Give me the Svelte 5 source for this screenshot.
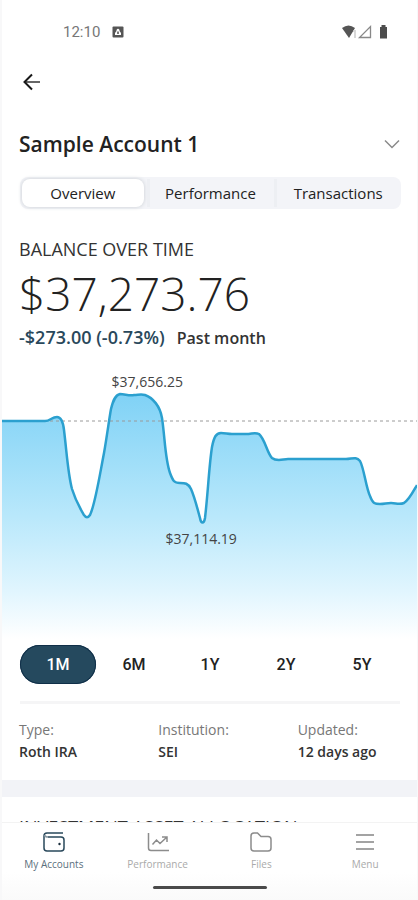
<script>
  const views = ['Overview', 'Performance', 'Transactions'];
  const ranges = ['1M', '6M', '1Y', '2Y', '5Y'];
  const details = [
    { label: 'Type:', value: 'Roth IRA' },
    { label: 'Institution:', value: 'SEI' },
    { label: 'Updated:', value: '12 days ago' }
  ];

  let view = $state('Overview');
  let range = $state('1M');

  const line =
    'M0 50 H43 C48 50 50 46 55 46 C59 46 61 50 62 59 C65 84 66 103 70 118 C74 131 79 139 82 144 C84 147 86 147 88 144 ' +
    'C93 134 97 108 102 82 C105 65 107 49 109 38 C111 30 113 24 118 23 C123 23 127 25 132 24 C136 24 139 23 143 24 ' +
    'C151 27 158 35 160 47 C163 67 163 88 168 102 C171 110 172 112 178 112 C183 112 186 112 189 118 C193 127 196 140 198 147 ' +
    'C199 153 202 153 203 147 C206 122 207 95 210 76 C212 66 214 62 219 62 C223 62 226 63 230 63 H244 C250 63 253 61 257 63 ' +
    'C263 68 265 82 270 87 C275 91 281 88 286 88 H344 C350 88 354 85 358 90 C362 97 364 117 368 125 ' +
    'C371 133 373 133 378 133 C383 133 384 132 389 132 C394 132 397 134 402 132 C407 129 411 121 415 114';
</script>

<div class="screen">
  <header class="status">
    <span class="time">12:10</span>
    <svg class="notice" width="12" height="12" viewBox="0 0 12 12" aria-hidden="true">
      <rect x="0.5" y="0.5" width="11" height="11" rx="1" fill="#555" />
      <path d="M3 9V7L4.5 5V4Q6 1.500 7.500 4V5L9 7V9Z" fill="#fff" />
      <path d="M5 8V5.500H7V8Z" fill="#777" />
    </svg>
    <svg class="signals" width="48" height="16" viewBox="0 0 48 16" aria-hidden="true">
      <path d="M1 4Q7.500 -1 14 4L8 14Z" fill="#555" />
      <path d="M12 7H15M14 8V14" stroke="#ccc" stroke-width="1.500" />
      <path d="M18.500 13.500H29.500V2.500Z" fill="none" stroke="#888" stroke-width="1.300" />
      <path d="M39 3H40.500V1H44.500V3H46V14.500H39Z" fill="#4d4d4d" />
    </svg>
  </header>

  <main>
    <button class="back" aria-label="Back">
      <svg width="18" height="18" viewBox="0 0 18 18" fill="none" stroke-width="2">
        <path d="M3 9H18" stroke="#666" />
        <path d="M10 1.500L2.500 9L10 16.500" stroke="#181818" />
      </svg>
    </button>

    <button class="account">
      <span>Sample Account 1</span>
      <svg width="16" height="10" viewBox="0 0 16 10" fill="none" stroke="#8a8a8a" stroke-width="1.500" aria-hidden="true">
        <path d="M1 1.500L8 8.500L15 1.500" />
      </svg>
    </button>

    <nav class="views" aria-label="Account views">
      {#each views as name}
        <button class:active={view === name} onclick={() => (view = name)}>{name}</button>
      {/each}
    </nav>

    <section class="balance">
      <h2>BALANCE OVER TIME</h2>
      <p class="amount">$37,273.76</p>
      <p class="change"><span>-$273.00 (-0.73%)</span>Past month</p>
    </section>

    <div class="chart">
      <svg viewBox="0 0 415 270" preserveAspectRatio="none" role="img" aria-label="Balance over the past month">
        <defs>
          <linearGradient id="fill" gradientUnits="userSpaceOnUse" x1="0" y1="23" x2="0" y2="268">
            <stop offset="0" stop-color="#80d2f6" />
            <stop offset="0.5" stop-color="#b9e8fb" />
            <stop offset="0.8" stop-color="#e0f5fe" />
            <stop offset="1" stop-color="#ffffff" />
          </linearGradient>
        </defs>
        <path d="{line} V270 H0 Z" fill="url(#fill)" />
        <path d="M0 50H415" stroke="#9a9a9a" stroke-dasharray="3 3" />
        <path d={line} fill="none" stroke="#2ba0cf" stroke-width="2.500" />
      </svg>
      <span class="peak">$37,656.25</span>
      <span class="low">$37,114.19</span>
    </div>

    <div class="ranges" role="group" aria-label="Time range">
      {#each ranges as name}
        <button class:active={range === name} onclick={() => (range = name)}>{name}</button>
      {/each}
    </div>

    <dl>
      {#each details as item}
        <div>
          <dt>{item.label}</dt>
          <dd>{item.value}</dd>
        </div>
      {/each}
    </dl>

    <section class="allocation">
      <h2>INVESTMENT ASSET ALLOCATION</h2>
    </section>
  </main>

  <nav class="tabs" aria-label="Main">
    <a href="#accounts" class="current">
      <svg width="22" height="20" viewBox="0 0 22 20" fill="none" stroke="#29485b" stroke-width="1.500">
        <path d="M20 1H4Q1 1 1 4V16Q1 19 4 19H18Q21 19 21 16V8Q21 5 18 5H5" />
        <path d="M5 5Q2 5 1.500 3" stroke="#8797a1" />
        <circle cx="16.500" cy="12" r="1.200" fill="#182c3a" stroke="none" />
      </svg>
      My Accounts
    </a>
    <a href="#performance">
      <svg width="22" height="20" viewBox="0 0 22 20" fill="none" stroke="#8c8c8c" stroke-width="1.500">
        <path d="M1.500 1V16Q1.500 18.500 4 18.500H22" />
        <path d="M5.500 12.500L9.500 8L13 11.500L20 5M15 5H20V10" />
      </svg>
      Performance
    </a>
    <a href="#files">
      <svg width="22" height="20" viewBox="0 0 22 20" fill="none" stroke="#8c8c8c" stroke-width="1.500">
        <path d="M1 4Q1 1 4 1H7.500L11 4.500H18Q21 4.500 21 7.500V16Q21 19 18 19H4Q1 19 1 16Z" />
      </svg>
      Files
    </a>
    <a href="#menu">
      <svg width="22" height="20" viewBox="0 0 22 20" fill="none" stroke="#858585" stroke-width="1.700">
        <path d="M2 3H20M2 10H20M2 17H20" />
      </svg>
      Menu
    </a>
  </nav>
  <div class="handle"><span></span></div>
</div>

<style>
  :global(body) { margin: 0; background: #fff; }
  .screen {
    box-sizing: border-box;
    display: flex;
    flex-direction: column;
    height: 100vh;
    border: solid #f8f8f9;
    border-width: 0 1px 0 2px;
    background: #fff;
    color: #222;
    font-family: "Open Sans", "Noto Sans", sans-serif;
  }
  button { border: 0; background: none; padding: 0; color: inherit; font: inherit; cursor: pointer; }
  a { color: inherit; text-decoration: none; }
  svg { display: block; }
  h2, p, dl, dd { margin: 0; }

  .status {
    display: flex;
    align-items: center;
    height: 64px;
    flex: none;
    padding: 0 28px 0 61px;
    font: 15px/20px Roboto, sans-serif;
    color: #777;
  }
  .notice { margin-left: 12px; }
  .signals { margin-left: auto; }

  main { flex: 1; min-height: 0; overflow: hidden auto; scrollbar-width: none; }

  .back { display: flex; align-items: center; height: 36px; margin-left: 20px; }
  .account {
    display: flex;
    align-items: center;
    justify-content: space-between;
    width: 100%;
    margin-top: 28px;
    padding: 0 17px;
    line-height: 32px;
    font-size: 21px;
    font-weight: 600;
  }

  .views {
    display: flex;
    gap: 6px;
    margin: 17px 16px 0 18px;
    padding: 2px;
    border-radius: 8px;
    background: #f3f4f8;
  }
  .views button {
    flex: 1;
    font-size: 15px;
    line-height: 28px;
  }
  .views button + button { box-shadow: -3px 0 #edeff3; }
  .views .active,
  .views button + .active { background: #fff; border-radius: 8px; box-shadow: 0 0 4px #c8cdd2; }

  .balance { padding: 0 17px; margin-top: 29px; }
  h2 { font-size: 18px; line-height: 22px; font-weight: 400; color: #333; }
  .amount { font-size: 46px; line-height: 66px; font-weight: 300; }
  .change { font-size: 16px; line-height: 22px; font-weight: 600; color: #333; }
  .change span { margin-right: 12px; font-size: 18px; color: #29485b; }

  .chart { position: relative; margin-top: 22px; color: #444; font-size: 14px; line-height: 20px; }
  .chart svg { width: 100%; height: 270px; }
  .chart span { position: absolute; transform: translateX(-50%); }
  .peak { left: 35%; top: 1px; }
  .low { left: 48%; top: 158px; }

  .ranges {
    display: flex;
    margin: 4px 17px 0 18px;
    padding-bottom: 17px;
    border-bottom: 3px solid #f5f5f6;
    font: 500 16px/39px Roboto, sans-serif;
  }
  .ranges button { flex: 1; border-radius: 20px; }
  .ranges .active { background: #25495e; color: #fff; box-shadow: inset 0 0 0 1px #102f48; }

  dl { display: grid; grid-template-columns: 1fr 1fr 1fr; margin: 0 -20px 0 17px; padding: 15px 0 17px; font-size: 14px; line-height: 22px; }
  dt { color: #777; }
  dd { font-weight: 600; color: #333; }

  .allocation { border-top: 17px solid #f2f3f7; padding: 19px 17px; }

  .tabs {
    display: flex;
    flex: none;
    border-top: 1px solid #f3f3f3;
    font-size: 10px;
    line-height: 16px;
    color: #aaa;
  }
  .tabs a { flex: 1; display: flex; flex-direction: column; align-items: center; gap: 4px; padding-top: 9px; }
  .tabs .current { color: #5b707d; }
  .handle { display: flex; justify-content: center; flex: none; padding: 14px 0 11px; background: linear-gradient(#fff, #fafafa); }
  .handle span { width: 114px; height: 3px; border-radius: 2px; background: #4a4a4a; }
</style>
